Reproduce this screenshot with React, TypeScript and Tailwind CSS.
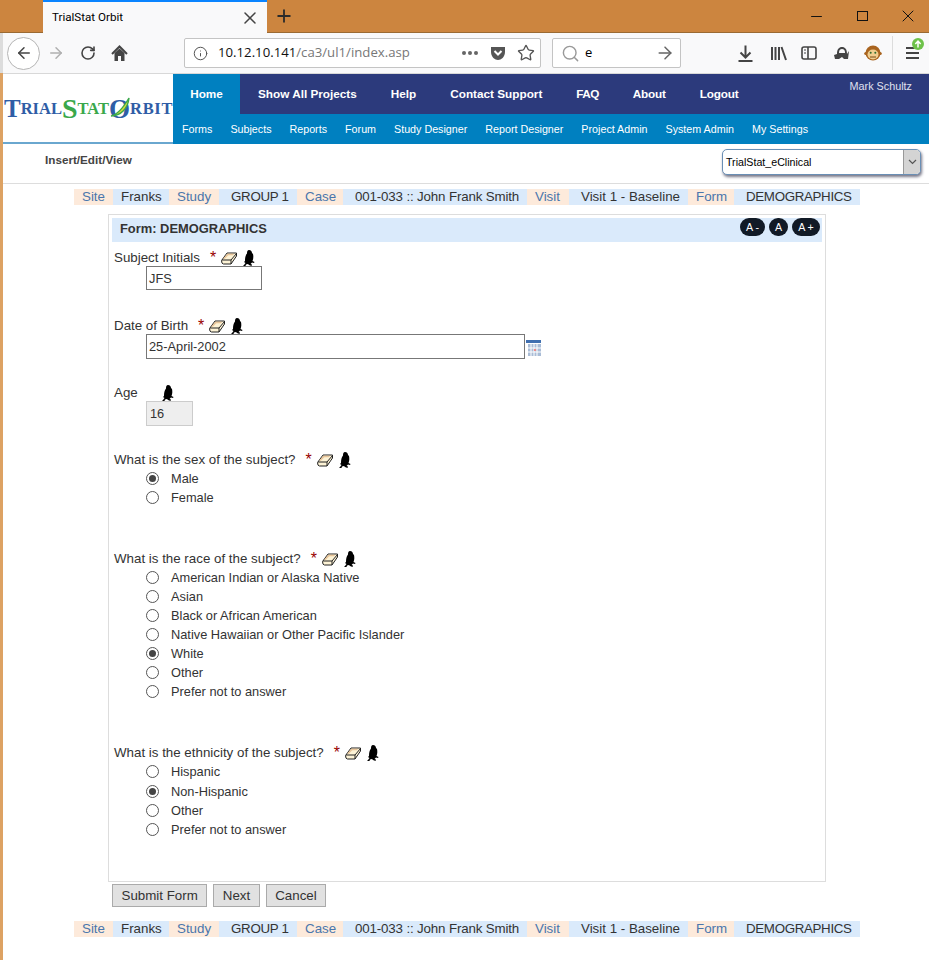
import { ArrowLeft, ArrowRight, Info, Minus, Plus, RotateCw, Search, Star, X } from "lucide-react";

const crumbs = [
  { k: "Site", kw: "w-[39px]", v: "Franks", vw: "w-[56px] pl-2" },
  { k: "Study", kw: "w-[50px]", v: "GROUP 1", vw: "w-[78px] pl-3 tracking-[-0.3px]" },
  { k: "Case", kw: "w-[46px]", v: "001-033 :: John Frank Smith", vw: "w-[184px] pl-3 tracking-[-0.15px]" },
  { k: "Visit", kw: "w-[42px]", v: "Visit 1 - Baseline", vw: "w-[119px] pl-3" },
  { k: "Form", kw: "w-[46px]", v: "DEMOGRAPHICS", vw: "w-[126px] pl-3 tracking-[-0.33px]" },
];

const topNav = [
  { t: "Show All Projects", c: "" },
  { t: "Help", c: "" },
  { t: "Contact Support", c: "" },
  { t: "FAQ", c: "tracking-[-0.6px]" },
  { t: "About", c: "tracking-[-0.2px]" },
  { t: "Logout", c: "tracking-[-0.15px]" },
];
const subNav = ["Forms", "Subjects", "Reports", "Forum", "Study Designer", "Report Designer", "Project Admin", "System Admin", "My Settings"];

const Eraser = () => (
  <svg width="16" height="13" viewBox="0 0 16 13" className="shrink-0">
    <path d="M0.5 8.5 L6 1 H15.5 V4 L10 12 H2.5 Q0.5 12 0.5 8.5Z" fill="#fdf3d6" stroke="#222" strokeWidth="1" />
    <path d="M1 8 H10 L15.5 1.5 M10 8 V12" fill="none" stroke="#222" strokeWidth="1" />
    <path d="M3 6.5 L7 2.5 H12.5" fill="none" stroke="#e9c59a" strokeWidth="1.6" />
  </svg>
);

const Bug = () => (
  <svg width="13" height="17" viewBox="0 0 13 17" className="shrink-0">
    <path d="M7 0 C9 0 10 1.5 10 3 L11 4 C11.5 6 11.5 9 10.5 11 L12.5 12 L12 13 L10 12.5 L8.5 14 L10 14.5 L9.5 16 L7 15 L6 14 L4 14.5 L3.5 16 H1 L2 15 L3.5 13 L2 12 L3 11 C3 8 3.5 5 5 3.5 C5 1.5 5.5 0 7 0Z" fill="#000" />
  </svg>
);

const Breadcrumb = () => (
  <div className="flex ml-[74px] h-4 leading-4 text-[13.33px] text-[#333]">
    {crumbs.map((c) => (
      <div key={c.k} className="flex">
        <span className={`${c.kw} pl-2 bg-[#fdeadb] text-[#4a76ac]`}>{c.k}</span>
        <span className={`${c.vw} bg-[#daeafb] whitespace-pre`}>{c.v}</span>
      </div>
    ))}
  </div>
);

const Label = ({ text, star = true, eraser = true }: { text: string; star?: boolean; eraser?: boolean }) => (
  <div className="flex items-center h-[18px] pt-[2px] pl-[2px] text-[13.33px] leading-[18px] text-[#333]">
    <span>{text}</span>
    {star && <span className="ml-[10px] w-[7px] text-[16px] leading-none text-[#900]">*</span>}
    {eraser && <span className="ml-[4px]"><Eraser /></span>}
    <span className={eraser ? "ml-[5px] mt-[1px]" : "ml-[23px] mt-[1px]"}><Bug /></span>
  </div>
);

const Radio = ({ label, checked }: { label: string; checked?: boolean }) => (
  <div className="flex items-center h-[19px] pl-[34px] text-[12.8px] text-[#333]">
    <span className="flex items-center justify-center w-[13px] h-[13px] rounded-full border border-[#555] bg-white">
      {checked && <span className="w-[7px] h-[7px] rounded-full bg-[#444]" />}
    </span>
    <span className="ml-[12px]">{label}</span>
  </div>
);

export default function App() {
  return (
    <div className="relative w-[929px] h-[960px] overflow-hidden bg-white font-['Liberation_Sans',Arial,sans-serif]">
      {/* left window edge */}
      <span className="absolute left-0 top-[33px] w-[3px] h-[40px] bg-[#dcdcdc]" />
      <span className="absolute left-0 top-[73px] w-[3px] h-[887px] bg-[#dda263]" />

      {/* browser frame */}
      <div className="flex h-[33px] bg-[#cc853f] border-b border-[#9a6a33]">
        <div className="flex items-center w-[224px] ml-[43px] h-[33px] bg-[#f9f9fa] border-t-2 border-[#0a84ff] pl-[9px] pr-[7px] text-[11.6px] text-black font-['Roboto',sans-serif]">
          <span className="flex-1">TrialStat Orbit</span>
          <X size={20} strokeWidth={1.8} className="text-[#444]" />
        </div>
        <Plus size={20} strokeWidth={2.2} className="ml-[7px] mt-[6px] text-[#2b2b2b]" />
        <div className="flex flex-1 items-center justify-end pr-[11px] text-[#111]">
          <Minus size={17} strokeWidth={1.4} />
          <span className="ml-[32px] w-[11px] h-[10px] border border-[#111]" />
          <X size={20} strokeWidth={1.2} className="ml-[30px]" />
        </div>
      </div>
      <div className="flex items-center h-[41px] pl-[7px] bg-[#f9f9fa] border-b border-[#d8d8d8] text-[#444]">
        <span className="flex items-center justify-center w-[33px] h-[33px] rounded-full border border-[#b5b5b5] bg-white">
          <ArrowLeft size={18} strokeWidth={2} />
        </span>
        <ArrowRight size={18} strokeWidth={2} className="ml-[7px] text-[#b0b0b0]" />
        <RotateCw size={16} strokeWidth={2.4} className="ml-[15px]" />
        <svg width="17" height="17" viewBox="0 0 17 17" className="ml-[15px]">
          <path d="M1 9 L8.5 1.5 L16 9" fill="none" stroke="#444" strokeWidth="2" />
          <path d="M3.5 8 V16 H7 V11 H10 V16 H13.5 V8 L8.5 3.5Z" fill="#444" />
        </svg>
        <div className="flex items-center w-[357px] h-[30px] ml-[56px] pl-[8px] pr-[5px] rounded-[2px] border border-[#c4c4c4] bg-white text-[13.2px] font-['Open_Sans',sans-serif]">
          <Info size={15} strokeWidth={1.6} className="text-[#555]" />
          <span className="ml-[10px] text-[#111]">10.12.10.141<span className="text-[#777]">/ca3/ul1/index.asp</span></span>
          <span className="ml-auto flex gap-[2px]">
            <span className="w-[4px] h-[4px] rounded-full bg-[#666]" />
            <span className="w-[4px] h-[4px] rounded-full bg-[#666]" />
            <span className="w-[4px] h-[4px] rounded-full bg-[#666]" />
          </span>
          <svg width="16" height="15" viewBox="0 0 16 15" className="ml-[12px]">
            <path d="M1 1 H15 V6 C15 11 11 14 8 14 C5 14 1 11 1 6Z" fill="#555" />
            <path d="M4.5 5 L8 8.5 L11.5 5" fill="none" stroke="#fff" strokeWidth="2" />
          </svg>
          <Star size={18} strokeWidth={1.8} className="ml-[11px] text-[#555]" />
        </div>
        <div className="flex items-center w-[129px] h-[30px] ml-[11px] pl-[8px] pr-[5px] rounded-[2px] border border-[#c4c4c4] bg-white">
          <Search size={19} strokeWidth={1.8} className="text-[#999]" />
          <span className="ml-[5px] text-[13px] text-black font-['Open_Sans',sans-serif]">e</span>
          <ArrowRight size={20} strokeWidth={1.8} className="ml-auto text-[#666]" />
        </div>
        <svg width="15" height="17" viewBox="0 0 15 17" className="ml-[57px]">
          <path d="M7.5 0.5 V12 M2.5 7.5 L7.5 12.5 L12.5 7.5 M0.5 16 H14.5" fill="none" stroke="#444" strokeWidth="2" />
        </svg>
        <svg width="16" height="15" viewBox="0 0 16 15" className="ml-[18px]">
          <path d="M1 1 V14 M4.5 1 V14 M8 1 V14 M10.5 1 L15 14" fill="none" stroke="#444" strokeWidth="2" />
        </svg>
        <svg width="16" height="14" viewBox="0 0 16 14" className="ml-[14px]">
          <rect x="1" y="1" width="14" height="12" rx="2" fill="none" stroke="#444" strokeWidth="1.6" />
          <path d="M7 1 V13" stroke="#444" strokeWidth="1.6" />
          <path d="M3 4 H5 M3 7 H5" stroke="#444" strokeWidth="1.2" />
        </svg>
        <svg width="17" height="15" viewBox="0 0 17 15" className="ml-[16px]">
          <path d="M4 8 C4 3 6 1 9 1 C12 1 14 3 14 8 L16 5 L15 13 H11 L9 11 L6 13 H2 L1 9Z" fill="#444" />
          <path d="M6 7 C6 4 7 3 9 3 C11 3 12 4 12 7Z" fill="#f9f9fa" />
        </svg>
        <svg width="18" height="18" viewBox="0 0 18 18" className="ml-[14px]">
          <circle cx="9" cy="9" r="7.5" fill="#a9641f" />
          <circle cx="1.8" cy="9.5" r="1.6" fill="#a9641f" />
          <circle cx="16.2" cy="9.5" r="1.6" fill="#a9641f" />
          <ellipse cx="9" cy="10.5" rx="5.5" ry="5" fill="#f0cd8f" />
          <circle cx="6.7" cy="8.7" r="1" fill="#2f6b2f" />
          <circle cx="11.3" cy="8.7" r="1" fill="#2f6b2f" />
          <path d="M6 13 H12" stroke="#7a4a16" strokeWidth="1" />
        </svg>
        <span className="ml-[10px] w-px h-[34px] bg-[#dcdcdc]" />
        <div className="relative ml-[13px] flex flex-col gap-[3px]">
          <span className="w-[13px] h-[2px] bg-[#444]" />
          <span className="w-[13px] h-[2px] bg-[#444]" />
          <span className="w-[13px] h-[2px] bg-[#444]" />
          <span className="absolute -top-[9px] left-[6px] flex items-center justify-center w-[12px] h-[12px] rounded-full bg-[#6ec24a]">
            <svg width="8" height="8" viewBox="0 0 8 8">
              <path d="M4 7.5 V1.5 M1.3 4 L4 1.2 L6.7 4" fill="none" stroke="#fff" strokeWidth="1.5" />
            </svg>
          </span>
        </div>
      </div>

      {/* app header */}
      <div className="flex h-[70px]">
        <div className="flex items-center w-[173px] pl-[4px] pt-[2px] whitespace-nowrap font-['Liberation_Serif',serif] font-bold border-b-2 border-[#6aa7cf]">
          <span className="text-[#2f5da6] text-[25px]">T</span>
          <span className="text-[#2f5da6] text-[16.5px]">RIAL</span>
          <span className="text-[#3aa84b] text-[28px]">S</span>
          <span className="text-[#3aa84b] text-[16.5px]">TAT</span>
          <span className="relative text-[#2f5da6] text-[27px]">
            O
            <svg width="22" height="22" viewBox="0 0 22 22" className="absolute left-0 top-[7px]">
              <path d="M2 20 C8 19 14 12 20 2 C19 12 12 20 2 20Z" fill="#d9d93a" stroke="#3aa84b" strokeWidth="1.4" />
            </svg>
          </span>
          <span className="text-[#2f5da6] text-[16.5px] tracking-[0.7px]">RBIT</span>
        </div>
        <div className="flex-1 flex flex-col">
          <div className="relative flex h-10 bg-[#2c3a7c] text-white text-[11.75px] font-bold">
            <span className="flex items-center justify-center w-[67px] bg-[#0080c0]">Home</span>
            <div className="flex items-center gap-[34px] pl-[18px]">
              {topNav.map((n) => (
                <span key={n.t} className={n.c}>{n.t}</span>
              ))}
            </div>
            <span className="absolute right-[17px] top-[4px] text-[10.8px] font-normal text-[#e0e2f0]">Mark Schultz</span>
          </div>
          <div className="flex items-center gap-[18px] flex-1 pl-[9px] bg-[#0080c0] text-white text-[10.72px]">
            {subNav.map((t) => (
              <span key={t}>{t}</span>
            ))}
          </div>
        </div>
      </div>

      {/* sub header */}
      <div className="flex h-[40px] border-b border-[#ddd]">
        <span className="ml-[45px] mt-[7px] text-[11.7px] font-bold text-[#444]">Insert/Edit/View</span>
        <div className="flex items-center h-[26px] w-[199px] ml-auto mr-[8px] mt-[5px] pl-[3px] rounded-[5px] border border-[#6a8fb5] bg-white shadow-[1px_2px_3px_#778] text-[10.67px] text-black">
          <span className="flex-1">TrialStat_eClinical</span>
          <span className="flex items-center justify-center w-[17px] h-full bg-[#d4d4d4] border-l border-[#999] rounded-r-[4px]">
            <svg width="9" height="6" viewBox="0 0 9 6">
              <path d="M1 1 L4.5 4.5 L8 1" fill="none" stroke="#555" strokeWidth="1.2" />
            </svg>
          </span>
        </div>
      </div>

      <div className="mt-[5px]">
        <Breadcrumb />
      </div>

      {/* form */}
      <div className="ml-[108px] mt-[9px] w-[718px] h-[668px] pt-[3px] px-[3px] border border-[#ddd]">
        <div className="flex items-start justify-between h-[24px] pl-[8px] pr-[2px] bg-[#daeafb] text-[12.9px] font-bold text-[#333]">
          <span className="mt-[1px]">Form: DEMOGRAPHICS</span>
          <div className="flex gap-[4px] text-[10.67px] font-normal text-white">
            <span className="flex items-center justify-center w-[25px] h-[18px] rounded-full bg-[#111a26]">A -</span>
            <span className="flex items-center justify-center w-[19px] h-[18px] rounded-full bg-[#111a26]">A</span>
            <span className="flex items-center justify-center w-[28px] h-[18px] rounded-full bg-[#111a26]">A +</span>
          </div>
        </div>

        <div className="mt-[6px]">
          <Label text="Subject Initials" />
          <div className="ml-[34px] w-[116px] h-6 pl-[2px] border border-[#777] text-[12.8px] leading-[24px] text-[#333]">JFS</div>
        </div>
        <div className="mt-[26px]">
          <Label text="Date of Birth" />
          <div className="flex items-end ml-[34px]">
            <div className="w-[379px] h-[25px] pl-[2px] border border-[#777] text-[12.8px] leading-[23px] text-[#333]">25-April-2002</div>
            <svg width="16" height="16" viewBox="0 0 16 16" className="mb-[3px]">
              <rect x="1" y="0" width="15" height="3" fill="#3f6fb0" />
              <rect x="3" y="4" width="13" height="12" fill="#a9bcd6" />
              <path d="M6 4 V16 M9 4 V16 M12 4 V16 M3 8 H16 M3 12 H16" stroke="#fff" strokeWidth="1" />
              <rect x="9" y="9" width="2" height="2" fill="#e88" />
            </svg>
          </div>
        </div>
        <div className="mt-[24px]">
          <Label text="Age" star={false} eraser={false} />
          <div className="ml-[34px] w-[47px] h-[25px] pl-[3px] border border-[#ccc] bg-[#eee] text-[12.8px] leading-[24px] text-[#333]">16</div>
        </div>
        <div className="mt-[24px]">
          <Label text="What is the sex of the subject?" />
          <div className="mt-[1px]">
            <Radio label="Male" checked />
            <Radio label="Female" />
          </div>
        </div>
        <div className="mt-[42px]">
          <Label text="What is the race of the subject?" />
          <div className="mt-[1px]">
            <Radio label="American Indian or Alaska Native" />
            <Radio label="Asian" />
            <Radio label="Black or African American" />
            <Radio label="Native Hawaiian or Other Pacific Islander" />
            <Radio label="White" checked />
            <Radio label="Other" />
            <Radio label="Prefer not to answer" />
          </div>
        </div>
        <div className="mt-[42px]">
          <Label text="What is the ethnicity of the subject?" />
          <div className="mt-[1px]">
            <Radio label="Hispanic" />
            <div className="mt-[1px]">
              <Radio label="Non-Hispanic" checked />
              <Radio label="Other" />
              <Radio label="Prefer not to answer" />
            </div>
          </div>
        </div>
      </div>

      <div className="flex gap-[6px] ml-[112px] mt-[2px] text-[13.33px] text-[#333]">
        {["Submit Form", "Next", "Cancel"].map((b) => (
          <span key={b} className="flex items-center h-[23px] px-[8.5px] border border-[#aaa] bg-[#e1e1e1]">{b}</span>
        ))}
      </div>
      <div className="mt-[14px]">
        <Breadcrumb />
      </div>
    </div>
  );
}
